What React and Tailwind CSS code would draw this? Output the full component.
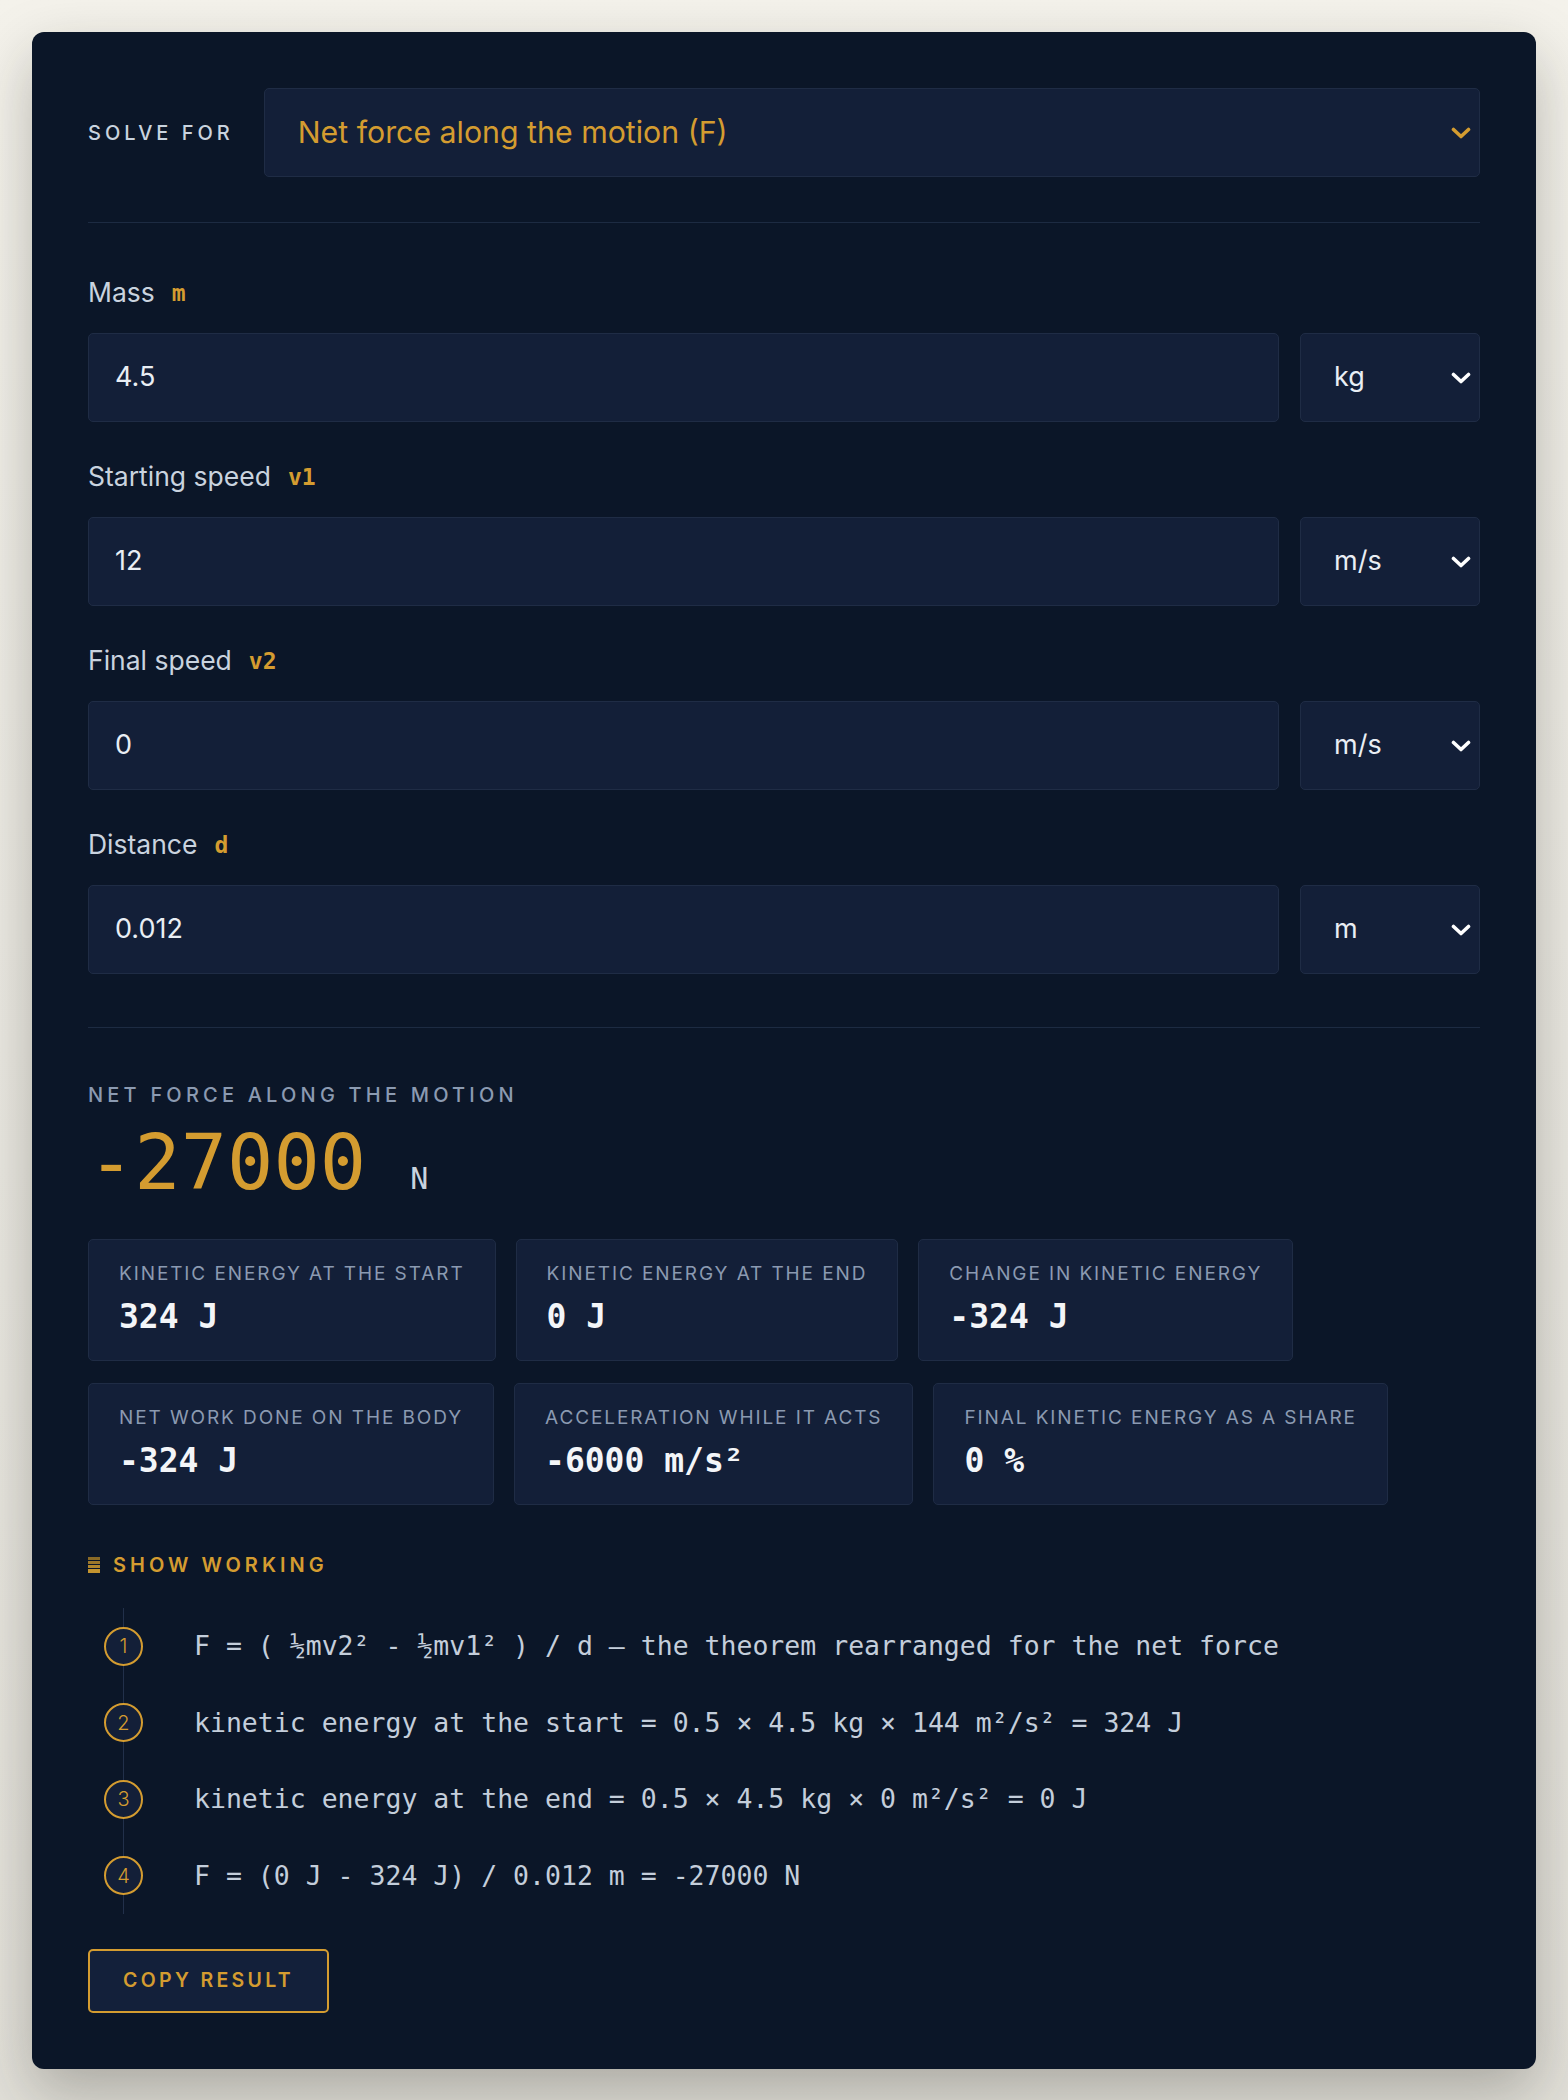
import { useState } from "react";

const sans = { fontFamily: "Inter, 'Noto Sans', sans-serif" };
const mono = { fontFamily: "'DejaVu Sans Mono', 'Liberation Mono', monospace" };

const fields = [
  { label: "Mass", sym: "m", value: "4.5", unit: "kg" },
  { label: "Starting speed", sym: "v1", value: "12", unit: "m/s" },
  { label: "Final speed", sym: "v2", value: "0", unit: "m/s" },
  { label: "Distance", sym: "d", value: "0.012", unit: "m" },
];

const stats = [
  { label: "Kinetic energy at the start", value: "324 J" },
  { label: "Kinetic energy at the end", value: "0 J" },
  { label: "Change in kinetic energy", value: "-324 J" },
  { label: "Net work done on the body", value: "-324 J" },
  { label: "Acceleration while it acts", value: "-6000 m/s²" },
  { label: "Final kinetic energy as a share", value: "0 %" },
];

const steps = [
  "F = ( ½mv2² - ½mv1² ) / d — the theorem rearranged for the net force",
  "kinetic energy at the start = 0.5 × 4.5 kg × 144 m²/s² = 324 J",
  "kinetic energy at the end = 0.5 × 4.5 kg × 0 m²/s² = 0 J",
  "F = (0 J - 324 J) / 0.012 m = -27000 N",
];

function Chevron({ className }) {
  return (
    <svg viewBox="0 0 20 12" className={className} fill="none">
      <path d="M2.5 2.5 L10 9.5 L17.5 2.5" stroke="currentColor" strokeWidth="3.6" strokeLinecap="round" strokeLinejoin="round" />
    </svg>
  );
}

function Field({ label, sym, value, unit }) {
  return (
    <div>
      <div className="flex h-[30px] items-center">
        <span className="text-[26.5px] text-[#c9d3df]" style={sans}>{label}</span>
        <span className="ml-[17px] text-[23px] font-bold text-[#d49c30]" style={mono}>{sym}</span>
      </div>
      <div className="mt-[25px] flex gap-[21px]">
        <div className="flex h-[89px] flex-1 items-center rounded-[5px] border border-[#1f2c45] bg-[#131f38] px-[26px] text-[27px] text-[#e9eef4]" style={sans}>
          {value}
        </div>
        <div className="flex h-[89px] w-[180px] items-center justify-between rounded-[5px] border border-[#1f2c45] bg-[#131f38] pl-[33px] pr-[8px] text-[27px] text-[#e9eef4]" style={sans}>
          {unit}
          <Chevron className="h-[12px] w-[20px] text-white" />
        </div>
      </div>
    </div>
  );
}

function Stat({ label, value }) {
  return (
    <div className="h-[122px] rounded-[5px] border border-[#1f2c45] bg-[#131f38] px-[30px] pt-[24px]">
      <p className="text-[19px] uppercase leading-[20px] tracking-[0.1em] text-[#8b9ab1]" style={sans}>
        {label}
      </p>
      <p className="mt-[13px] text-[33px] font-bold leading-[40px] text-[#f3f5f8]" style={mono}>
        {value}
      </p>
    </div>
  );
}

export default function App() {
  const [open] = useState(true);

  return (
    <div className="min-h-screen bg-gradient-to-b from-[#f4f2eb] to-[#e2e0d9] p-8">
      <div className="rounded-xl bg-[#0b1628] p-14 shadow-[0_24px_60px_rgba(30,30,20,0.28)]">
        <div className="flex items-center gap-[30px]">
          <span className="text-[20px] font-medium uppercase tracking-[0.2em] text-[#c9d3df]" style={sans}>
            Solve for
          </span>
          <div className="flex h-[89px] flex-1 items-center justify-between rounded-[5px] border border-[#1f2c45] bg-[#131f38] pl-[33px] pr-[8px] text-[30.3px] text-[#d49c30]" style={sans}>
            Net force along the motion (F)
            <Chevron className="h-[12px] w-[20px] text-[#d49c30]" />
          </div>
        </div>

        <div className="mt-[45px] h-px bg-[#1d2b42]" />

        <div className="mt-[55px] flex flex-col gap-[40px]">
          {fields.map((f) => (
            <Field key={f.label} {...f} />
          ))}
        </div>

        <div className="mt-[53px] h-px bg-[#1d2b42]" />

        <div className="mt-[55px]">
          <p className="text-[20px] font-medium uppercase leading-[24px] tracking-[0.21em] text-[#8b9ab1]" style={sans}>
            Net force along the motion
          </p>
          <div className="mt-[17px] flex items-baseline">
            <span className="text-[77px] leading-none text-[#d49c30]" style={mono}>-27000</span>
            <span className="ml-[44px] text-[30px] text-[#c9d3df]" style={mono}>N</span>
          </div>
        </div>

        <div className="mt-[38px] flex flex-wrap gap-x-[20px] gap-y-[22px]">
          {stats.map((s) => (
            <Stat key={s.label} {...s} />
          ))}
        </div>

        <div className="mt-[48px] flex h-[24px] items-center">
          <svg viewBox="0 0 12 16" className="h-[16px] w-[12px]">
            <rect x="0" y="0" width="12" height="3" fill="#8a6a26" />
            <rect x="0" y="4" width="12" height="3" fill="#9c772a" />
            <rect x="0" y="8" width="12" height="3" fill="#b1862d" />
            <rect x="0" y="12" width="12" height="4" fill="#c4942f" />
          </svg>
          <span className="ml-[13px] text-[20px] font-semibold uppercase tracking-[0.2em] text-[#d49c30]" style={sans}>
            Show working
          </span>
        </div>

        {open && (
          <div className="ml-[35px] mt-[31px] border-l border-[#22304a]">
            {steps.map((s, i) => (
              <div key={i} className="flex h-[76.5px] items-center">
                <div className="-ml-[20px] flex h-[39px] w-[39px] shrink-0 items-center justify-center rounded-full border-2 border-[#d49c30] bg-[#131f38] text-[20px] font-light text-[#d49c30]" style={sans}>
                  {i + 1}
                </div>
                <span className="ml-[51px] whitespace-nowrap text-[26.5px] text-[#c4cedb]" style={mono}>
                  {s}
                </span>
              </div>
            ))}
          </div>
        )}

        <button
          type="button"
          className="mt-[35px] flex h-[64px] w-[241px] items-center justify-center rounded-[5px] border-2 border-[#d49c30] bg-[#13203a] text-[19.5px] font-semibold uppercase tracking-[0.17em] text-[#d49c30]"
          style={sans}
        >
          Copy result
        </button>
      </div>
    </div>
  );
}
